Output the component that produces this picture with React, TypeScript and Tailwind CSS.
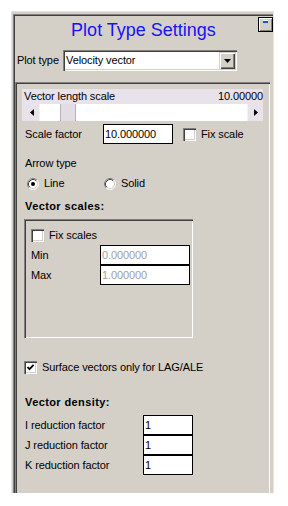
import React from "react";

function Checkbox({ checked = false }: { checked?: boolean }) {
  return (
    <div className="w-[13px] h-[13px] shrink-0 bg-white shadow-[inset_1px_1px_0_#808080,inset_2px_2px_0_#404040,inset_-1px_-1px_0_#ffffff,inset_-2px_-2px_0_#d4d0c8] flex items-center justify-center">
      {checked && (
        <svg width="9" height="9" viewBox="0 0 9 9">
          <path d="M1.5 4 L3.5 6.2 L7.6 1.8" fill="none" stroke="#000" strokeWidth="1.8" />
        </svg>
      )}
    </div>
  );
}

function Radio({ selected = false }: { selected?: boolean }) {
  return (
    <svg width="12" height="12" viewBox="0 0 12 12" className="shrink-0">
      <circle cx="6" cy="6" r="5" fill="#fff" />
      <path d="M2.11 9.89 A5.5 5.5 0 0 1 9.89 2.11" fill="none" stroke="#808080" strokeWidth="1" />
      <path d="M9.89 2.11 A5.5 5.5 0 0 1 2.11 9.89" fill="none" stroke="#ffffff" strokeWidth="1" />
      <path d="M2.82 9.18 A4.5 4.5 0 0 1 9.18 2.82" fill="none" stroke="#404040" strokeWidth="1" />
      <path d="M9.18 2.82 A4.5 4.5 0 0 1 2.82 9.18" fill="none" stroke="#d4d0c8" strokeWidth="1" />
      {selected && <circle cx="6" cy="6" r="2" fill="#000" />}
    </svg>
  );
}

function Field({ value, w, gray = false }: { value: string; w: string; gray?: boolean }) {
  return (
    <div
      className={
        "h-[20px] shrink-0 border border-black bg-white flex items-center pl-[1px] " +
        w +
        (gray ? " text-[#a0a0a0]" : " text-black")
      }
    >
      {value}
    </div>
  );
}

export default function App() {
  return (
    <div className="w-[288px] h-[506px] bg-white pt-[11px] pl-[11px] font-['Liberation_Sans',Arial,sans-serif] text-[11px] leading-[13px] text-black tracking-[-0.1px]">
      <div className="w-[263px] h-[482px] bg-[#D4D0C8] border-t border-l border-r border-t-[#E4E0E6] border-l-[#E4E0E6] border-r-[#EDE5DC] flex">
        <div className="flex-1 ml-[1px] mt-[2px] flex flex-col shadow-[inset_1px_1px_0_#808080,inset_2px_2px_0_#404040]">
          {/* Title row */}
          <div className="flex items-start pt-[3px]">
            <div className="w-[16px]" />
            <div className="flex-1 text-center mt-[3px] text-[18px] leading-[20px] tracking-normal text-[#1414F5]">
              Plot Type Settings
            </div>
            <div className="w-[15px] h-[15px] border border-black bg-[#D4D0C8] shadow-[inset_1px_1px_0_#ffffff,inset_-1px_-1px_0_#808080] flex justify-center pt-[2px]">
              <svg width="5" height="4" viewBox="0 0 5 4">
                <rect x="0" y="0" width="5" height="1" fill="#ffffff" />
                <rect x="0" y="1" width="5" height="2" fill="#1a4cf0" />
              </svg>
            </div>
          </div>

          {/* Plot type row */}
          <div className="mt-[10px] flex items-center pl-[4px]">
            <div className="w-[46px]">Plot type</div>
            <div className="w-[174px] h-[21px] bg-white flex items-center pl-[3px] pr-[2px] shadow-[inset_1px_1px_0_#808080,inset_2px_2px_0_#404040,inset_-1px_-1px_0_#ffffff,inset_-2px_-2px_0_#d4d0c8]">
              <div className="flex-1">Velocity vector</div>
              <div className="w-[16px] h-[17px] bg-[#D4D0C8] flex items-center justify-center shadow-[inset_1px_1px_0_#d4d0c8,inset_2px_2px_0_#ffffff,inset_-1px_-1px_0_#404040,inset_-2px_-2px_0_#808080]">
                <svg width="7" height="4" viewBox="0 0 7 4">
                  <path d="M0 0 H7 L3.5 4 Z" fill="#000" />
                </svg>
              </div>
            </div>
          </div>

          {/* Group box */}
          <div className="mt-[11px] ml-[2px] mr-[3px] flex-1 pt-[7px] pl-[7px] pr-[7px] flex flex-col shadow-[inset_1px_1px_0_#808080,inset_2px_2px_0_#404040,inset_-1px_0_0_#ffffff]">
            {/* Slider panel */}
            <div className="bg-[#E8E2EA] flex flex-col">
              <div className="h-[15px] flex items-center justify-between pl-[2px]">
                <span>Vector length scale</span>
                <span>10.00000</span>
              </div>
              <div className="h-[17px] ml-[2px] flex bg-white">
                <div className="w-[16px] h-full bg-[#E8E2EA] flex items-center justify-center border-r border-[#F4F0F4]">
                  <svg width="4" height="7" viewBox="0 0 4 7">
                    <path d="M4 0 V7 L0 3.5 Z" fill="#000" />
                  </svg>
                </div>
                <div className="flex-1 flex">
                  <div className="ml-[20px] w-[16px] h-full bg-[#E2DCE4] border-x border-[#B8B0B8]" />
                </div>
                <div className="w-[16px] h-full bg-[#E8E2EA] flex items-center justify-center border-l border-[#F4F0F4]">
                  <svg width="4" height="7" viewBox="0 0 4 7">
                    <path d="M0 0 V7 L4 3.5 Z" fill="#000" />
                  </svg>
                </div>
              </div>
            </div>

            {/* Scale factor */}
            <div className="mt-[3px] h-[20px] flex items-center pl-[3px]">
              <div className="w-[78px]">Scale factor</div>
              <Field value="10.000000" w="w-[70px]" />
              <div className="ml-[10px]">
                <Checkbox />
              </div>
              <div className="ml-[5px]">Fix scale</div>
            </div>

            {/* Arrow type */}
            <div className="mt-[13px] pl-[3px]">Arrow type</div>
            <div className="mt-[7px] h-[13px] flex items-center pl-[5px]">
              <div className="w-[77px] flex items-center gap-[5px]">
                <Radio selected />
                <span>Line</span>
              </div>
              <div className="flex items-center gap-[5px]">
                <Radio />
                <span>Solid</span>
              </div>
            </div>

            {/* Vector scales */}
            <div className="mt-[10px] pl-[3px] font-bold tracking-[0.4px]">Vector scales:</div>
            <div className="mt-[6px] ml-[2px] w-[169px] h-[119px] pt-[10px] pl-[7px] pr-[3px] flex flex-col shadow-[inset_1px_1px_0_#808080,inset_2px_2px_0_#404040,inset_-1px_-1px_0_#ffffff,inset_-2px_-2px_0_#d4d0c8]">
              <div className="h-[13px] flex items-center gap-[5px]">
                <Checkbox />
                <span>Fix scales</span>
              </div>
              <div className="mt-[3px] h-[20px] flex items-center">
                <div className="w-[69px]">Min</div>
                <Field value="0.000000" w="w-[90px]" gray />
              </div>
              <div className="h-[20px] flex items-center">
                <div className="w-[69px]">Max</div>
                <Field value="1.000000" w="w-[90px]" gray />
              </div>
            </div>

            {/* Surface vectors */}
            <div className="mt-[23px] ml-[2px] h-[13px] flex items-center gap-[5px]">
              <Checkbox checked />
              <span>Surface vectors only for LAG/ALE</span>
            </div>

            {/* Vector density */}
            <div className="mt-[22px] pl-[3px] font-bold tracking-[0.4px]">Vector density:</div>
            <div className="mt-[6px] flex flex-col">
              <div className="h-[20px] flex items-center pl-[3px]">
                <div className="w-[118px]">I reduction factor</div>
                <Field value="1" w="w-[50px]" />
              </div>
              <div className="h-[20px] flex items-center pl-[3px]">
                <div className="w-[118px]">J reduction factor</div>
                <Field value="1" w="w-[50px]" />
              </div>
              <div className="h-[20px] flex items-center pl-[3px]">
                <div className="w-[118px]">K reduction factor</div>
                <Field value="1" w="w-[50px]" />
              </div>
            </div>
          </div>
        </div>
      </div>
    </div>
  );
}
